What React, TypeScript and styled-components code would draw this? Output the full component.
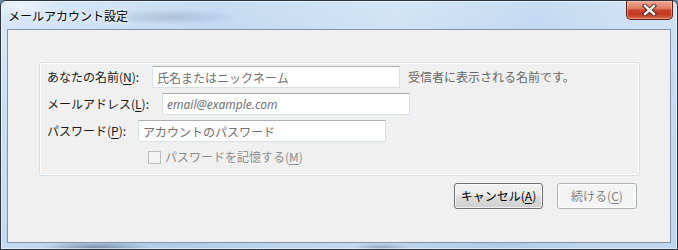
import React from "react";
import styled, { createGlobalStyle } from "styled-components";

const Global = createGlobalStyle`
  * { box-sizing: border-box; }
  html, body { margin: 0; padding: 0; background: #6f8aa6; }
  body { font-family: "Noto Sans CJK JP", "Noto Sans", sans-serif; }
`;

const Window = styled.div`
  width: 678px;
  height: 250px;
  display: flex;
  flex-direction: column;
  border: 1px solid #2a3440;
  border-radius: 6px 6px 0 0;
  overflow: hidden;
  background:
    radial-gradient(ellipse 55px 7px at 95px 247px, rgba(40, 60, 90, 0.45), transparent),
    radial-gradient(ellipse 30px 5px at 380px 247px, rgba(40, 60, 90, 0.3), transparent),
    linear-gradient(100deg, rgba(255,255,255,0.35) 0%, rgba(255,255,255,0) 30%, rgba(255,255,255,0.25) 55%, rgba(255,255,255,0) 75%, rgba(255,255,255,0.2) 90%),
    linear-gradient(180deg, #c6ddf3 0%, #b6d2ee 40%, #b0cce9 100%);
  box-shadow: inset 0 0 0 1px rgba(255, 255, 255, 0.55);
`;

const TitleBar = styled.div`
  height: 28px;
  display: flex;
  justify-content: space-between;
  align-items: flex-start;
  padding: 0 4px 0 7px;
  background:
    radial-gradient(ellipse 70px 8px at 170px 16px, rgba(70, 90, 120, 0.22), transparent),
    radial-gradient(ellipse 40px 10px at 20px 6px, rgba(255, 255, 255, 0.5), transparent);
`;

const Title = styled.div`
  font-size: 12px;
  line-height: 14px;
  color: #000;
  margin-top: 8px;
  text-shadow: 0 0 8px rgba(255, 255, 255, 0.9), 0 0 3px rgba(255, 255, 255, 0.9);
`;

const CloseButton = styled.div`
  width: 47px;
  height: 19px;
  display: flex;
  align-items: center;
  justify-content: center;
  border: 1px solid #5e2218;
  border-top: none;
  border-radius: 0 0 5px 5px;
  background: linear-gradient(180deg, #eca593 0%, #e07f66 40%, #c9412a 52%, #c23a22 75%, #db6a47 100%);
  box-shadow: inset 0 0 0 1px rgba(255, 210, 200, 0.45);
`;

const Client = styled.div`
  margin: 0 6px;
  height: 214px;
  background: #f0f0f0;
  border: 1px solid #8193a8;
  padding: 32px 30px 0 31px;
  display: flex;
  flex-direction: column;
`;

const GroupBox = styled.div`
  height: 114px;
  border: 1px solid #d5dfe5;
  border-radius: 3px;
  box-shadow: inset 0 0 0 1px #ffffff;
  padding: 3px 7px 0 7px;
  display: flex;
  flex-direction: column;
  gap: 5px;
`;

const Row = styled.div`
  display: flex;
  align-items: center;
  height: 22px;
`;

const Label = styled.label<{ $w: number }>`
  width: ${(p) => p.$w}px;
  flex: none;
  font-size: 12px;
  line-height: 16px;
  color: #1a1a1a;
  white-space: nowrap;
`;

const Key = styled.span`
  text-decoration: underline;
  text-underline-offset: 2px;
`;

const TextBox = styled.input<{ $italic?: boolean }>`
  width: 248px;
  height: 22px;
  flex: none;
  margin: 0;
  padding: 0 4px;
  border: 1px solid #dbdfe6;
  border-top-color: #abadb3;
  background: #fff;
  font-family: ${(p) => (p.$italic ? `"Noto Sans", sans-serif` : `"Noto Sans CJK JP", sans-serif`)};
  font-style: ${(p) => (p.$italic ? "italic" : "normal")};
  font-size: 12px;
  outline: none;
  &::placeholder {
    color: #707070;
    opacity: 1;
  }
`;

const Hint = styled.span`
  margin-left: 8px;
  font-size: 12px;
  line-height: 16px;
  color: #666666;
  white-space: nowrap;
`;

const CheckRow = styled.div`
  display: flex;
  align-items: center;
  height: 20px;
  padding-left: 101px;
  gap: 4px;
`;

const CheckBox = styled.span`
  width: 13px;
  height: 13px;
  border: 1px solid #bcbcbc;
  background: #f4f4f4;
  flex: none;
`;

const CheckLabel = styled.span`
  font-size: 12px;
  line-height: 16px;
  color: #8d8d8d;
  white-space: nowrap;
`;

const ButtonRow = styled.div`
  display: flex;
  justify-content: flex-end;
  gap: 14px;
  margin-top: 7px;
  padding-right: 3px;
`;

const Button = styled.button<{ $w: number; $disabled?: boolean }>`
  width: ${(p) => p.$w}px;
  height: 26px;
  margin: 0;
  padding: 0;
  border-radius: 3px;
  font-family: "Noto Sans CJK JP", sans-serif;
  font-size: 12px;
  line-height: 16px;
  border: 1px solid ${(p) => (p.$disabled ? "#adb2b5" : "#707070")};
  color: ${(p) => (p.$disabled ? "#838383" : "#000")};
  background: ${(p) =>
    p.$disabled
      ? "#f4f4f4"
      : "linear-gradient(180deg, #f2f2f2 0%, #ebebeb 49%, #dddddd 50%, #cfcfcf 100%)"};
  box-shadow: inset 0 0 0 1px rgba(255, 255, 255, ${(p) => (p.$disabled ? 0.9 : 0.7)});
`;

export default function App() {
  return (
    <>
      <Global />
      <Window>
        <TitleBar>
          <Title>メールアカウント設定</Title>
          <CloseButton>
            <svg width="15" height="12" viewBox="0 0 15 12">
              <path d="M3 2 L12 10 M12 2 L3 10" stroke="#3b1a14" strokeWidth="4.2" strokeLinecap="square" />
              <path d="M3 2 L12 10 M12 2 L3 10" stroke="#ffffff" strokeWidth="2.4" strokeLinecap="square" />
            </svg>
          </CloseButton>
        </TitleBar>
        <Client>
          <GroupBox>
            <Row>
              <Label $w={105}>
                あなたの名前(<Key>N</Key>):
              </Label>
              <TextBox placeholder="氏名またはニックネーム" />
              <Hint>受信者に表示される名前です。</Hint>
            </Row>
            <Row>
              <Label $w={115}>
                メールアドレス(<Key>L</Key>):
              </Label>
              <TextBox $italic placeholder="email@example.com" />
            </Row>
            <Row>
              <Label $w={91}>
                パスワード(<Key>P</Key>):
              </Label>
              <TextBox placeholder="アカウントのパスワード" />
            </Row>
            <CheckRow>
              <CheckBox />
              <CheckLabel>
                パスワードを記憶する(<Key>M</Key>)
              </CheckLabel>
            </CheckRow>
          </GroupBox>
          <ButtonRow>
            <Button $w={89}>
              キャンセル(<Key>A</Key>)
            </Button>
            <Button $w={80} $disabled>
              続ける(<Key>C</Key>)
            </Button>
          </ButtonRow>
        </Client>
      </Window>
    </>
  );
}
